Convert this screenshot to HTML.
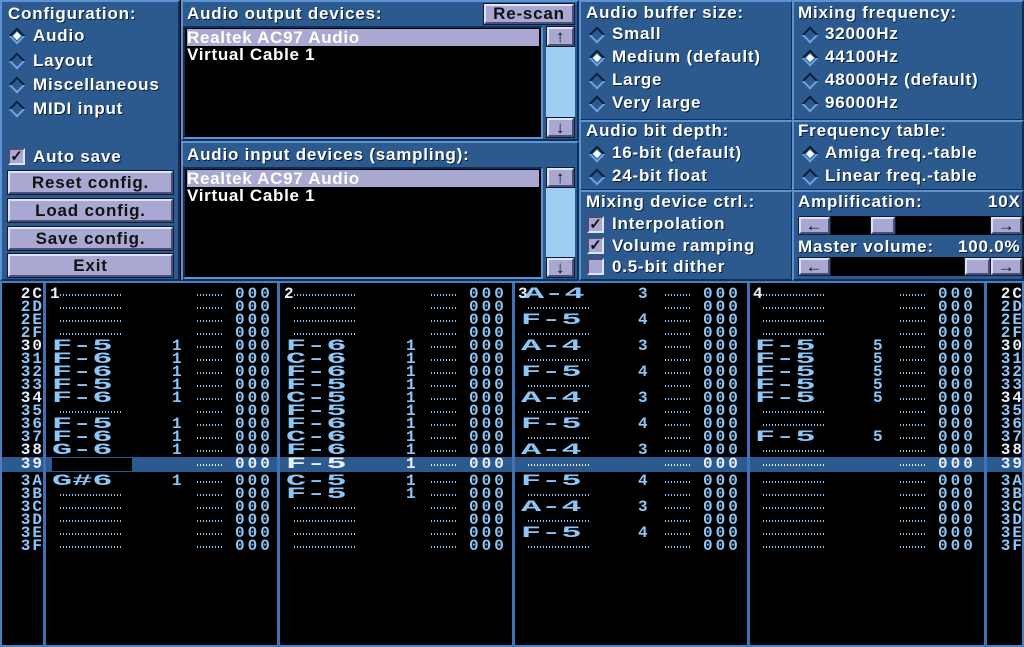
<!DOCTYPE html>
<html><head><meta charset="utf-8"><style>
*{margin:0;padding:0;box-sizing:border-box}
body{width:1024px;height:647px;background:#000;position:relative;overflow:hidden;font-family:"Liberation Sans",sans-serif}
.p{position:absolute;background:#2c5a8e;border:2px solid;border-color:#5d93d3 #102f56 #102f56 #5d93d3}
.t{position:absolute;color:#fff;font-weight:bold;font-size:17px;letter-spacing:.8px;text-shadow:1px 1px 0 #0a1e38;white-space:nowrap;line-height:18px}
.r{position:absolute;width:12px;height:12px;transform:rotate(45deg);background:#2c5a8e;border:2px solid;border-color:#0a1e38 #6ea2e0 #6ea2e0 #0a1e38}
.r.s::after{content:"";position:absolute;left:1px;top:1px;width:6px;height:6px;background:#fff}
.b{position:absolute;background:#a9a8d2;border:2px solid;border-color:#e2e2f6 #4e4d78 #4e4d78 #e2e2f6;color:#111;font-weight:bold;font-size:17px;text-align:center;line-height:19px;letter-spacing:.8px;outline:1px solid #0a1e38}
.lst{position:absolute;background:#000;border:2px solid;border-color:#102f56 #5d93d3 #5d93d3 #102f56}
.li{position:absolute;left:2px;color:#fff;font-weight:bold;font-size:17px;line-height:17px;letter-spacing:.7px;white-space:nowrap}
.sel{background:#a9a8d2;width:352px}
.sb{position:absolute;background:#9ccdf2}
.cb{position:absolute;width:17px;height:17px;background:#a9a8d2;border:2px solid;border-color:#4e4d78 #e2e2f6 #e2e2f6 #4e4d78;color:#111;font-size:15px;line-height:13px;text-align:center;font-weight:bold}
.tr{position:absolute;background:#000}
#pat{position:absolute;left:0;top:281px;width:1024px;height:366px;background:#000;border:2px solid #4a80bf}
.vl{position:absolute;top:283px;width:3px;height:364px;background:#3d73b3}
.row{position:absolute;left:0;width:1024px;height:13px;font-family:"Liberation Mono",monospace;color:#8cc6f6;font-size:16px;line-height:13px;font-weight:bold;letter-spacing:3px}
.row span{position:absolute;white-space:pre}
.rn{width:44px;text-align:right;letter-spacing:2px}
.w{color:#e6f0ff}
.n{font-size:16px;transform:scaleX(2.1);transform-origin:left;letter-spacing:0px;font-weight:bold}
.d{height:2px;top:6px;background:repeating-linear-gradient(90deg,#8cc6f6 0 1px,transparent 1px 3px)}
.hl{position:absolute;left:2px;top:457px;width:1020px;height:15px;background:#2c5a8e}
</style></head><body>

<div class="p" style="left:0;top:0;width:180px;height:281px"></div>
<div class="t" style="left:8px;top:5px">Configuration:</div>
<div class="r s" style="left:11px;top:30px"></div><div class="t" style="left:33px;top:27px">Audio</div>
<div class="r" style="left:11px;top:55px"></div><div class="t" style="left:33px;top:52px">Layout</div>
<div class="r" style="left:11px;top:79px"></div><div class="t" style="left:33px;top:76px">Miscellaneous</div>
<div class="r" style="left:11px;top:103px"></div><div class="t" style="left:33px;top:100px">MIDI input</div>
<div class="cb" style="left:8px;top:148px">✓</div><div class="t" style="left:33px;top:148px">Auto save</div>
<div class="b" style="left:8px;top:171px;width:165px;height:23px">Reset config.</div>
<div class="b" style="left:8px;top:199px;width:165px;height:23px">Load config.</div>
<div class="b" style="left:8px;top:227px;width:165px;height:23px">Save config.</div>
<div class="b" style="left:8px;top:254px;width:165px;height:23px">Exit</div>

<div class="p" style="left:181px;top:0;width:398px;height:141px"></div>
<div class="t" style="left:187px;top:5px">Audio output devices:</div>
<div class="b" style="left:484px;top:4px;width:90px;height:20px;line-height:16px">Re-scan</div>
<div class="lst" style="left:183px;top:26px;width:360px;height:113px">
<div class="li sel" style="top:1px">Realtek AC97 Audio</div>
<div class="li" style="top:18px">Virtual Cable 1</div></div>
<div class="sb" style="left:546px;top:27px;width:29px;height:110px"></div>
<div class="b" style="left:547px;top:27px;width:27px;height:19px;line-height:15px">↑</div>
<div class="b" style="left:547px;top:118px;width:27px;height:19px;line-height:15px">↓</div>

<div class="p" style="left:181px;top:141px;width:398px;height:140px"></div>
<div class="t" style="left:187px;top:146px">Audio input devices (sampling):</div>
<div class="lst" style="left:183px;top:167px;width:360px;height:112px">
<div class="li sel" style="top:1px">Realtek AC97 Audio</div>
<div class="li" style="top:18px">Virtual Cable 1</div></div>
<div class="sb" style="left:546px;top:168px;width:29px;height:109px"></div>
<div class="b" style="left:547px;top:168px;width:27px;height:19px;line-height:15px">↑</div>
<div class="b" style="left:547px;top:258px;width:27px;height:19px;line-height:15px">↓</div>

<div class="p" style="left:579px;top:0;width:214px;height:121px"></div>
<div class="t" style="left:586px;top:4px">Audio buffer size:</div>
<div class="r" style="left:591px;top:29px"></div><div class="t" style="left:612px;top:25px">Small</div>
<div class="r s" style="left:591px;top:52px"></div><div class="t" style="left:612px;top:48px">Medium (default)</div>
<div class="r" style="left:591px;top:75px"></div><div class="t" style="left:612px;top:71px">Large</div>
<div class="r" style="left:591px;top:98px"></div><div class="t" style="left:612px;top:94px">Very large</div>
<div class="p" style="left:579px;top:120px;width:214px;height:71px"></div>
<div class="t" style="left:586px;top:122px">Audio bit depth:</div>
<div class="r s" style="left:591px;top:148px"></div><div class="t" style="left:612px;top:144px">16-bit (default)</div>
<div class="r" style="left:591px;top:171px"></div><div class="t" style="left:612px;top:167px">24-bit float</div>
<div class="p" style="left:579px;top:190px;width:214px;height:91px"></div>
<div class="t" style="left:586px;top:193px">Mixing device ctrl.:</div>
<div class="cb" style="left:587px;top:216px">✓</div><div class="t" style="left:612px;top:215px">Interpolation</div>
<div class="cb" style="left:587px;top:237px">✓</div><div class="t" style="left:612px;top:237px">Volume ramping</div>
<div class="cb" style="left:587px;top:258px"></div><div class="t" style="left:612px;top:258px">0.5-bit dither</div>

<div class="p" style="left:792px;top:0;width:232px;height:121px"></div>
<div class="t" style="left:798px;top:4px">Mixing frequency:</div>
<div class="r" style="left:804px;top:29px"></div><div class="t" style="left:825px;top:25px">32000Hz</div>
<div class="r s" style="left:804px;top:52px"></div><div class="t" style="left:825px;top:48px">44100Hz</div>
<div class="r" style="left:804px;top:75px"></div><div class="t" style="left:825px;top:71px">48000Hz (default)</div>
<div class="r" style="left:804px;top:98px"></div><div class="t" style="left:825px;top:94px">96000Hz</div>
<div class="p" style="left:792px;top:120px;width:232px;height:71px"></div>
<div class="t" style="left:798px;top:122px">Frequency table:</div>
<div class="r s" style="left:804px;top:148px"></div><div class="t" style="left:825px;top:144px">Amiga freq.-table</div>
<div class="r" style="left:804px;top:171px"></div><div class="t" style="left:825px;top:167px">Linear freq.-table</div>
<div class="p" style="left:792px;top:190px;width:232px;height:91px"></div>
<div class="t" style="left:798px;top:193px">Amplification:</div><div class="t" style="left:988px;top:193px">10X</div>
<div class="tr" style="left:798px;top:216px;width:226px;height:19px"></div>
<div class="b" style="left:799px;top:217px;width:31px;height:17px;line-height:13px">←</div>
<div class="b" style="left:871px;top:217px;width:24px;height:17px"></div>
<div class="b" style="left:991px;top:217px;width:31px;height:17px;line-height:13px">→</div>
<div class="t" style="left:798px;top:238px">Master volume:</div><div class="t" style="left:958px;top:238px">100.0%</div>
<div class="tr" style="left:798px;top:257px;width:226px;height:19px"></div>
<div class="b" style="left:799px;top:258px;width:31px;height:17px;line-height:13px">←</div>
<div class="b" style="left:965px;top:258px;width:25px;height:17px"></div>
<div class="b" style="left:991px;top:258px;width:31px;height:17px;line-height:13px">→</div>

<div id="pat"></div>
<div class="hl"></div>
<div class="vl" style="left:43px"></div><div class="vl" style="left:277px"></div><div class="vl" style="left:512px"></div><div class="vl" style="left:747px"></div><div class="vl" style="left:984px"></div>

<div class="row" style="top:288px"><span class="rn w" style="left:0">2C</span><span class="w" style="left:50px">1</span><span class="d" style="left:60px;width:62px"></span><span class="d" style="left:197px;width:26px"></span><span style="left:235px">000</span><span class="w" style="left:284px">2</span><span class="d" style="left:294px;width:62px"></span><span class="d" style="left:431px;width:26px"></span><span style="left:469px">000</span><span class="w" style="left:518px">3</span><span class="n" style="left:524px">A-4</span><span style="left:638px">3</span><span class="d" style="left:665px;width:26px"></span><span style="left:703px">000</span><span class="w" style="left:753px">4</span><span class="d" style="left:763px;width:62px"></span><span class="d" style="left:900px;width:26px"></span><span style="left:938px">000</span><span class="rn w" style="left:980px">2C</span></div>
<div class="row" style="top:301px"><span class="rn" style="left:0">2D</span><span class="d" style="left:60px;width:62px"></span><span class="d" style="left:197px;width:26px"></span><span style="left:235px">000</span><span class="d" style="left:294px;width:62px"></span><span class="d" style="left:431px;width:26px"></span><span style="left:469px">000</span><span class="d" style="left:528px;width:62px"></span><span class="d" style="left:665px;width:26px"></span><span style="left:703px">000</span><span class="d" style="left:763px;width:62px"></span><span class="d" style="left:900px;width:26px"></span><span style="left:938px">000</span><span class="rn" style="left:980px">2D</span></div>
<div class="row" style="top:314px"><span class="rn" style="left:0">2E</span><span class="d" style="left:60px;width:62px"></span><span class="d" style="left:197px;width:26px"></span><span style="left:235px">000</span><span class="d" style="left:294px;width:62px"></span><span class="d" style="left:431px;width:26px"></span><span style="left:469px">000</span><span class="n" style="left:521px">F-5</span><span style="left:638px">4</span><span class="d" style="left:665px;width:26px"></span><span style="left:703px">000</span><span class="d" style="left:763px;width:62px"></span><span class="d" style="left:900px;width:26px"></span><span style="left:938px">000</span><span class="rn" style="left:980px">2E</span></div>
<div class="row" style="top:327px"><span class="rn" style="left:0">2F</span><span class="d" style="left:60px;width:62px"></span><span class="d" style="left:197px;width:26px"></span><span style="left:235px">000</span><span class="d" style="left:294px;width:62px"></span><span class="d" style="left:431px;width:26px"></span><span style="left:469px">000</span><span class="d" style="left:528px;width:62px"></span><span class="d" style="left:665px;width:26px"></span><span style="left:703px">000</span><span class="d" style="left:763px;width:62px"></span><span class="d" style="left:900px;width:26px"></span><span style="left:938px">000</span><span class="rn" style="left:980px">2F</span></div>
<div class="row" style="top:340px"><span class="rn w" style="left:0">30</span><span class="n" style="left:52px">F-5</span><span style="left:172px">1</span><span class="d" style="left:197px;width:26px"></span><span style="left:235px">000</span><span class="n" style="left:286px">F-6</span><span style="left:406px">1</span><span class="d" style="left:431px;width:26px"></span><span style="left:469px">000</span><span class="n" style="left:521px">A-4</span><span style="left:638px">3</span><span class="d" style="left:665px;width:26px"></span><span style="left:703px">000</span><span class="n" style="left:755px">F-5</span><span style="left:873px">5</span><span class="d" style="left:900px;width:26px"></span><span style="left:938px">000</span><span class="rn w" style="left:980px">30</span></div>
<div class="row" style="top:353px"><span class="rn" style="left:0">31</span><span class="n" style="left:52px">F-6</span><span style="left:172px">1</span><span class="d" style="left:197px;width:26px"></span><span style="left:235px">000</span><span class="n" style="left:286px">C-6</span><span style="left:406px">1</span><span class="d" style="left:431px;width:26px"></span><span style="left:469px">000</span><span class="d" style="left:528px;width:62px"></span><span class="d" style="left:665px;width:26px"></span><span style="left:703px">000</span><span class="n" style="left:755px">F-5</span><span style="left:873px">5</span><span class="d" style="left:900px;width:26px"></span><span style="left:938px">000</span><span class="rn" style="left:980px">31</span></div>
<div class="row" style="top:366px"><span class="rn" style="left:0">32</span><span class="n" style="left:52px">F-6</span><span style="left:172px">1</span><span class="d" style="left:197px;width:26px"></span><span style="left:235px">000</span><span class="n" style="left:286px">F-6</span><span style="left:406px">1</span><span class="d" style="left:431px;width:26px"></span><span style="left:469px">000</span><span class="n" style="left:521px">F-5</span><span style="left:638px">4</span><span class="d" style="left:665px;width:26px"></span><span style="left:703px">000</span><span class="n" style="left:755px">F-5</span><span style="left:873px">5</span><span class="d" style="left:900px;width:26px"></span><span style="left:938px">000</span><span class="rn" style="left:980px">32</span></div>
<div class="row" style="top:379px"><span class="rn" style="left:0">33</span><span class="n" style="left:52px">F-5</span><span style="left:172px">1</span><span class="d" style="left:197px;width:26px"></span><span style="left:235px">000</span><span class="n" style="left:286px">F-5</span><span style="left:406px">1</span><span class="d" style="left:431px;width:26px"></span><span style="left:469px">000</span><span class="d" style="left:528px;width:62px"></span><span class="d" style="left:665px;width:26px"></span><span style="left:703px">000</span><span class="n" style="left:755px">F-5</span><span style="left:873px">5</span><span class="d" style="left:900px;width:26px"></span><span style="left:938px">000</span><span class="rn" style="left:980px">33</span></div>
<div class="row" style="top:392px"><span class="rn w" style="left:0">34</span><span class="n" style="left:52px">F-6</span><span style="left:172px">1</span><span class="d" style="left:197px;width:26px"></span><span style="left:235px">000</span><span class="n" style="left:286px">C-5</span><span style="left:406px">1</span><span class="d" style="left:431px;width:26px"></span><span style="left:469px">000</span><span class="n" style="left:521px">A-4</span><span style="left:638px">3</span><span class="d" style="left:665px;width:26px"></span><span style="left:703px">000</span><span class="n" style="left:755px">F-5</span><span style="left:873px">5</span><span class="d" style="left:900px;width:26px"></span><span style="left:938px">000</span><span class="rn w" style="left:980px">34</span></div>
<div class="row" style="top:405px"><span class="rn" style="left:0">35</span><span class="d" style="left:60px;width:62px"></span><span class="d" style="left:197px;width:26px"></span><span style="left:235px">000</span><span class="n" style="left:286px">F-5</span><span style="left:406px">1</span><span class="d" style="left:431px;width:26px"></span><span style="left:469px">000</span><span class="d" style="left:528px;width:62px"></span><span class="d" style="left:665px;width:26px"></span><span style="left:703px">000</span><span class="d" style="left:763px;width:62px"></span><span class="d" style="left:900px;width:26px"></span><span style="left:938px">000</span><span class="rn" style="left:980px">35</span></div>
<div class="row" style="top:418px"><span class="rn" style="left:0">36</span><span class="n" style="left:52px">F-5</span><span style="left:172px">1</span><span class="d" style="left:197px;width:26px"></span><span style="left:235px">000</span><span class="n" style="left:286px">F-6</span><span style="left:406px">1</span><span class="d" style="left:431px;width:26px"></span><span style="left:469px">000</span><span class="n" style="left:521px">F-5</span><span style="left:638px">4</span><span class="d" style="left:665px;width:26px"></span><span style="left:703px">000</span><span class="d" style="left:763px;width:62px"></span><span class="d" style="left:900px;width:26px"></span><span style="left:938px">000</span><span class="rn" style="left:980px">36</span></div>
<div class="row" style="top:431px"><span class="rn" style="left:0">37</span><span class="n" style="left:52px">F-6</span><span style="left:172px">1</span><span class="d" style="left:197px;width:26px"></span><span style="left:235px">000</span><span class="n" style="left:286px">C-6</span><span style="left:406px">1</span><span class="d" style="left:431px;width:26px"></span><span style="left:469px">000</span><span class="d" style="left:528px;width:62px"></span><span class="d" style="left:665px;width:26px"></span><span style="left:703px">000</span><span class="n" style="left:755px">F-5</span><span style="left:873px">5</span><span class="d" style="left:900px;width:26px"></span><span style="left:938px">000</span><span class="rn" style="left:980px">37</span></div>
<div class="row" style="top:444px"><span class="rn w" style="left:0">38</span><span class="n" style="left:52px">G-6</span><span style="left:172px">1</span><span class="d" style="left:197px;width:26px"></span><span style="left:235px">000</span><span class="n" style="left:286px">F-6</span><span style="left:406px">1</span><span class="d" style="left:431px;width:26px"></span><span style="left:469px">000</span><span class="n" style="left:521px">A-4</span><span style="left:638px">3</span><span class="d" style="left:665px;width:26px"></span><span style="left:703px">000</span><span class="d" style="left:763px;width:62px"></span><span class="d" style="left:900px;width:26px"></span><span style="left:938px">000</span><span class="rn w" style="left:980px">38</span></div>
<div class="row w" style="top:458px;color:#e6f0ff"><span class="rn" style="left:0">39</span><span style="left:52px;top:0;width:80px;height:13px;background:#000"></span><span class="d" style="left:197px;width:26px;background:repeating-linear-gradient(90deg,#fff 0 1px,transparent 1px 3px)"></span><span style="left:235px">000</span><span class="n" style="left:286px">F-5</span><span style="left:406px">1</span><span class="d" style="left:431px;width:26px;background:repeating-linear-gradient(90deg,#fff 0 1px,transparent 1px 3px)"></span><span style="left:469px">000</span><span class="d" style="left:528px;width:62px;background:repeating-linear-gradient(90deg,#fff 0 1px,transparent 1px 3px)"></span><span class="d" style="left:665px;width:26px;background:repeating-linear-gradient(90deg,#fff 0 1px,transparent 1px 3px)"></span><span style="left:703px">000</span><span class="d" style="left:763px;width:62px;background:repeating-linear-gradient(90deg,#fff 0 1px,transparent 1px 3px)"></span><span class="d" style="left:900px;width:26px;background:repeating-linear-gradient(90deg,#fff 0 1px,transparent 1px 3px)"></span><span style="left:938px">000</span><span class="rn" style="left:980px">39</span></div>
<div class="row" style="top:475px"><span class="rn" style="left:0">3A</span><span class="n" style="left:52px">G#6</span><span style="left:172px">1</span><span class="d" style="left:197px;width:26px"></span><span style="left:235px">000</span><span class="n" style="left:286px">C-5</span><span style="left:406px">1</span><span class="d" style="left:431px;width:26px"></span><span style="left:469px">000</span><span class="n" style="left:521px">F-5</span><span style="left:638px">4</span><span class="d" style="left:665px;width:26px"></span><span style="left:703px">000</span><span class="d" style="left:763px;width:62px"></span><span class="d" style="left:900px;width:26px"></span><span style="left:938px">000</span><span class="rn" style="left:980px">3A</span></div>
<div class="row" style="top:488px"><span class="rn" style="left:0">3B</span><span class="d" style="left:60px;width:62px"></span><span class="d" style="left:197px;width:26px"></span><span style="left:235px">000</span><span class="n" style="left:286px">F-5</span><span style="left:406px">1</span><span class="d" style="left:431px;width:26px"></span><span style="left:469px">000</span><span class="d" style="left:528px;width:62px"></span><span class="d" style="left:665px;width:26px"></span><span style="left:703px">000</span><span class="d" style="left:763px;width:62px"></span><span class="d" style="left:900px;width:26px"></span><span style="left:938px">000</span><span class="rn" style="left:980px">3B</span></div>
<div class="row" style="top:501px"><span class="rn" style="left:0">3C</span><span class="d" style="left:60px;width:62px"></span><span class="d" style="left:197px;width:26px"></span><span style="left:235px">000</span><span class="d" style="left:294px;width:62px"></span><span class="d" style="left:431px;width:26px"></span><span style="left:469px">000</span><span class="n" style="left:521px">A-4</span><span style="left:638px">3</span><span class="d" style="left:665px;width:26px"></span><span style="left:703px">000</span><span class="d" style="left:763px;width:62px"></span><span class="d" style="left:900px;width:26px"></span><span style="left:938px">000</span><span class="rn" style="left:980px">3C</span></div>
<div class="row" style="top:514px"><span class="rn" style="left:0">3D</span><span class="d" style="left:60px;width:62px"></span><span class="d" style="left:197px;width:26px"></span><span style="left:235px">000</span><span class="d" style="left:294px;width:62px"></span><span class="d" style="left:431px;width:26px"></span><span style="left:469px">000</span><span class="d" style="left:528px;width:62px"></span><span class="d" style="left:665px;width:26px"></span><span style="left:703px">000</span><span class="d" style="left:763px;width:62px"></span><span class="d" style="left:900px;width:26px"></span><span style="left:938px">000</span><span class="rn" style="left:980px">3D</span></div>
<div class="row" style="top:527px"><span class="rn" style="left:0">3E</span><span class="d" style="left:60px;width:62px"></span><span class="d" style="left:197px;width:26px"></span><span style="left:235px">000</span><span class="d" style="left:294px;width:62px"></span><span class="d" style="left:431px;width:26px"></span><span style="left:469px">000</span><span class="n" style="left:521px">F-5</span><span style="left:638px">4</span><span class="d" style="left:665px;width:26px"></span><span style="left:703px">000</span><span class="d" style="left:763px;width:62px"></span><span class="d" style="left:900px;width:26px"></span><span style="left:938px">000</span><span class="rn" style="left:980px">3E</span></div>
<div class="row" style="top:540px"><span class="rn" style="left:0">3F</span><span class="d" style="left:60px;width:62px"></span><span class="d" style="left:197px;width:26px"></span><span style="left:235px">000</span><span class="d" style="left:294px;width:62px"></span><span class="d" style="left:431px;width:26px"></span><span style="left:469px">000</span><span class="d" style="left:528px;width:62px"></span><span class="d" style="left:665px;width:26px"></span><span style="left:703px">000</span><span class="d" style="left:763px;width:62px"></span><span class="d" style="left:900px;width:26px"></span><span style="left:938px">000</span><span class="rn" style="left:980px">3F</span></div>
</body></html>
